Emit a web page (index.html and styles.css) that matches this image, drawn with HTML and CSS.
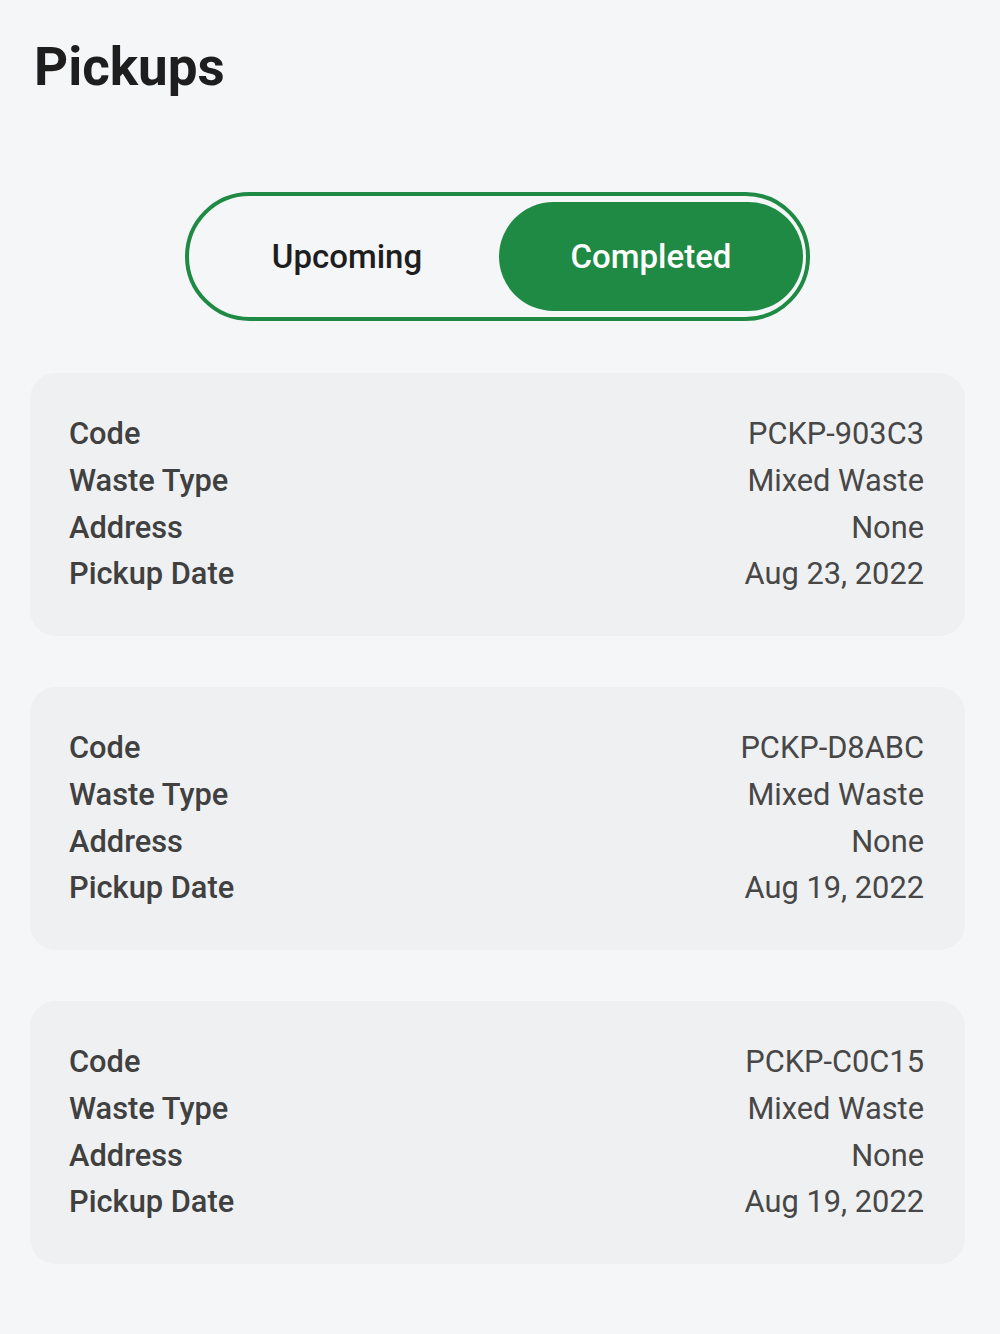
FILE: index.html
```html
<!DOCTYPE html>
<html>
<head>
<meta charset="utf-8">
<link rel="stylesheet" href="styles.css">
</head>
<body>
<div class="page">
  <h1 class="title">Pickups</h1>
  <div class="toggle-wrap">
    <div class="toggle">
      <div class="tab">Upcoming</div>
      <div class="tab active">Completed</div>
    </div>
  </div>
  <div class="cards">
    <div class="card">
      <div class="row"><span class="label">Code</span><span class="value">PCKP-903C3</span></div>
      <div class="row"><span class="label">Waste Type</span><span class="value">Mixed Waste</span></div>
      <div class="row"><span class="label">Address</span><span class="value">None</span></div>
      <div class="row"><span class="label">Pickup Date</span><span class="value">Aug 23, 2022</span></div>
    </div>
    <div class="card">
      <div class="row"><span class="label">Code</span><span class="value">PCKP-D8ABC</span></div>
      <div class="row"><span class="label">Waste Type</span><span class="value">Mixed Waste</span></div>
      <div class="row"><span class="label">Address</span><span class="value">None</span></div>
      <div class="row"><span class="label">Pickup Date</span><span class="value">Aug 19, 2022</span></div>
    </div>
    <div class="card">
      <div class="row"><span class="label">Code</span><span class="value">PCKP-C0C15</span></div>
      <div class="row"><span class="label">Waste Type</span><span class="value">Mixed Waste</span></div>
      <div class="row"><span class="label">Address</span><span class="value">None</span></div>
      <div class="row"><span class="label">Pickup Date</span><span class="value">Aug 19, 2022</span></div>
    </div>
  </div>
</div>
</body>
</html>
```

FILE: styles.css
```css
html, body {
  margin: 0;
  padding: 0;
  background: #f5f6f8;
}
body {
  font-family: Roboto, "Noto Sans", sans-serif;
  width: 1000px;
  height: 1334px;
  overflow: hidden;
}
.page {
  padding: 36px 0 0 0;
}
.title {
  margin: 0;
  padding-left: 34px;
  font-size: 53px;
  line-height: 62px;
  font-weight: 700;
  color: #1e1e1e;
}
.toggle-wrap {
  display: flex;
  padding-left: 185px;
  margin-top: 94px;
}
.toggle {
  box-sizing: border-box;
  width: 625px;
  height: 129px;
  border: 4px solid #1f8a44;
  border-radius: 999px;
  padding: 6px 3px 6px 6px;
  display: flex;
}
.tab {
  flex: 1;
  display: flex;
  align-items: center;
  justify-content: center;
  font-size: 33px;
  font-weight: 500;
  color: #1e1e1e;
  border-radius: 999px;
}
.tab.active {
  background: #1f8a44;
  color: #ffffff;
}
.cards {
  display: flex;
  flex-direction: column;
  gap: 51px;
  padding: 0 35px 0 30px;
  margin-top: 52px;
}
.card {
  background: #eff0f2;
  border-radius: 26px;
  padding: 38px 41px 38px 39px;
}
.row {
  display: flex;
  justify-content: space-between;
  font-size: 30.8px;
  line-height: 46.75px;
  color: #444444;
}
.label {
  font-weight: 500;
  color: #404040;
}
.value {
  font-weight: 400;
  color: #474747;
}
```
